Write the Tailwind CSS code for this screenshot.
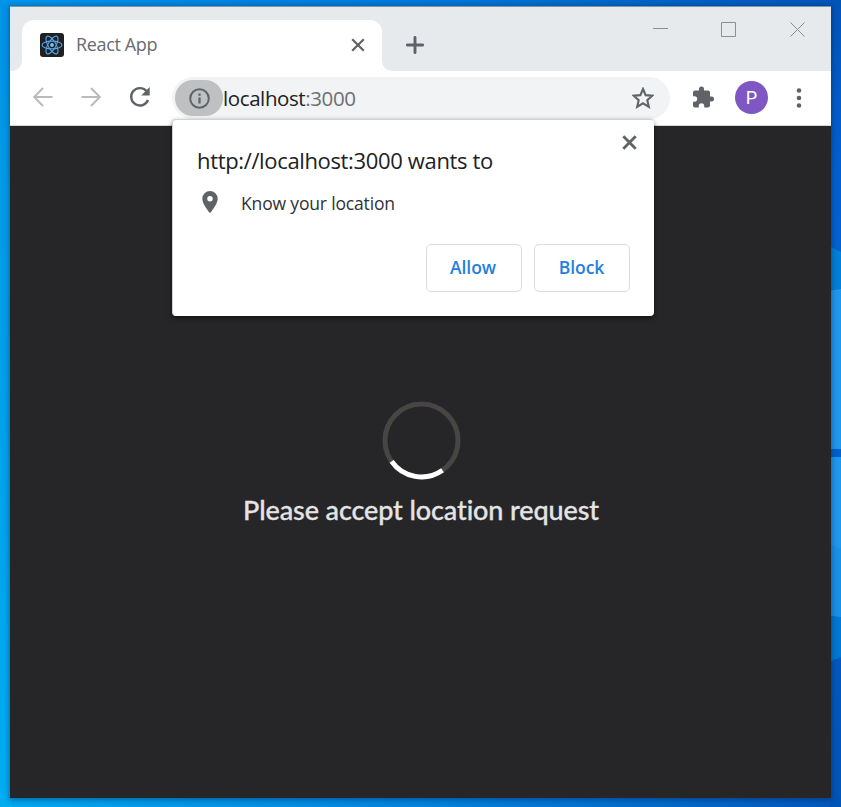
<!DOCTYPE html>
<html lang="en">
<head>
<meta charset="utf-8">
<title>React App</title>
<script src="https://cdn.jsdelivr.net/npm/@tailwindcss/browser@4"></script>
</head>
<body class="h-[807px] w-[841px] overflow-hidden bg-linear-to-r from-[#00a8f0] via-[#0084dc] to-[#0058bc] font-['Open_Sans','Noto_Sans',sans-serif]">
<div class="relative h-[807px] w-[841px] pt-[6px] pl-[10px]">
  <!-- desktop wallpaper -->
  <div class="absolute top-0 left-0 h-[807px] w-[12px] bg-linear-to-b from-[#0092e6] via-[#009ce8] via-30% to-[#00acf2]"></div>
  <div class="absolute top-0 left-0 h-[7px] w-full bg-linear-to-r from-[#0094e8] via-[#0078d8] via-50% to-[#0055b8]"></div>
  <svg class="absolute top-0 left-[829px]" width="12" height="807">
    <defs><linearGradient id="w" x1="0" x2="0" y1="0" y2="1"><stop offset="0" stop-color="#0054b8"/><stop offset=".2" stop-color="#0060d0"/><stop offset=".3" stop-color="#0062d0"/><stop offset="1" stop-color="#0055b8"/></linearGradient></defs>
    <rect width="12" height="807" fill="url(#w)"/>
    <path d="M0 246l12 6v37H0z" fill="#0080d8"/>
    <path d="M0 290l12-1v160H0z" fill="#1e98ee"/>
    <path d="M0 449h12v8H0z" fill="#0060cc"/>
    <path d="M0 457h12v160l-12-1z" fill="#1e98ee"/>
    <path d="M0 545l12 3v69l-12-1z" fill="#1890e8"/>
    <path d="M0 616l12 1v40l-12 5z" fill="#0078d4"/>
  </svg>

  <!-- browser window -->
  <div class="relative flex h-[792px] w-[821px] flex-col border-t border-[#8494a0] bg-[#262628] shadow-[0_1px_5px_1px_rgba(0,20,60,0.4)]">
    <header class="flex h-[64px] items-end bg-[#e6eaed]">
      <div class="h-[51px] w-[12px] bg-white"><div class="h-full rounded-br-[10px] bg-[#e6eaed]"></div></div>
      <div class="flex h-[51px] w-[360px] items-center rounded-t-[12px] bg-white pb-[2px] pl-[18px]">
        <svg class="h-6 w-6" viewBox="0 0 24 24" fill="none" stroke="#55a5e8" stroke-width="1.1">
          <rect width="24" height="24" rx="3" fill="#202023" stroke="none"/>
          <ellipse cx="12" cy="12" rx="10" ry="3.9"/>
          <ellipse cx="12" cy="12" rx="10" ry="3.9" transform="rotate(60 12 12)"/>
          <ellipse cx="12" cy="12" rx="10" ry="3.9" transform="rotate(120 12 12)"/>
          <circle cx="12" cy="12" r="1.9" fill="#79c4f8" stroke="none"/>
        </svg>
        <span class="ml-[12px] w-[275px] text-[18px] tracking-[-0.35px] text-[#686b70]">React App</span>
        <svg class="h-[14px] w-[14px]" viewBox="0 0 14 14" stroke="#5f6368" stroke-width="2.2"><path d="M1.2 1.2l11.6 11.6M12.8 1.2L1.2 12.8"/></svg>
      </div>
      <div class="h-[51px] w-[12px] bg-white"><div class="h-full rounded-bl-[10px] bg-[#e6eaed]"></div></div>
      <svg class="mb-[17px] ml-[12px] h-[18px] w-[18px]" viewBox="0 0 18 18" stroke="#5f6368" stroke-width="2.900" stroke-linecap="round"><path d="M1.4 9h15.2M9 1.4v15.2"/></svg>
      <svg class="mb-[33px] ml-[229px] h-[18px] w-[160px]" viewBox="0 0 160 18" fill="none" stroke="#8b8f94" stroke-width="1"><path d="M0 8.500h15"/><path d="M68.500 2.500h14v14h-14z"/><path d="M137.500 2.500l14 14M151.500 2.500l-14 14"/></svg>
    </header>

    <div class="flex h-[55px] items-center border-b border-[#d5d7d9] bg-white pb-px pl-[23px]">
      <svg class="mb-px h-[20px] w-[20px]" viewBox="0 0 20 20" fill="none" stroke="#b9bbbe" stroke-width="2.100"><path d="M19.500 10H1.500M10 1L1.200 10L10 19"/></svg>
      <svg class="mb-px ml-[28px] h-[20px] w-[20px]" viewBox="0 0 20 20" fill="none" stroke="#b9bbbe" stroke-width="2.100"><path d="M.500 10h18M10 1l8.800 9L10 19"/></svg>
      <svg class="mb-px ml-[28px] h-[22px] w-[22px]" viewBox="0 0 22 22" fill="none" stroke="#5f6368" stroke-width="2.400"><path d="M17.300 4.900A8.700 8.700 0 1 0 19 14"/><path d="M20.700 1v8.500h-8.500z" fill="#5f6368" stroke="none"/></svg>
      <div class="mt-px ml-[21px] flex h-[42px] w-[498px] items-center rounded-full bg-[#f1f3f4] pl-[3px]">
        <div class="flex h-[36px] w-[48px] items-center justify-center rounded-full bg-[#bec0c2]">
          <svg class="h-[21px] w-[21px]" viewBox="0 0 21 21" fill="none" stroke="#5f6368" stroke-width="2"><circle cx="10.500" cy="10.500" r="9.300"/><path d="M10.500 9.500v6M10.500 5.500v2.200" stroke-width="2.300"/></svg>
        </div>
        <span class="w-[409px] text-[20.500px] tracking-[-0.4px] text-[#202124]">localhost<span class="text-[#6c7074]">:3000</span></span>
        <svg class="h-[22px] w-[22px]" viewBox="1 1 20 20" fill="none" stroke="#5f6368" stroke-width="1.900"><path d="M11 2.800l2.400 5.600 6.100.5-4.600 4.100 1.400 6L11 15.800l-5.300 3.200 1.400-6L2.500 8.900l6.100-.5z"/></svg>
      </div>
      <svg class="ml-[22px] h-[24px] w-[24px]" viewBox="1 1.500 24 24" fill="#5f6368"><path d="M20.500 11H19V7c0-1.100-.9-2-2-2h-4V3.500a2.500 2.500 0 0 0-5 0V5H4c-1.100 0-2 .9-2 2v3.800h1.500a2.700 2.700 0 0 1 0 5.400H2V20c0 1.100.9 2 2 2h3.800v-1.500a2.700 2.700 0 0 1 5.400 0V22H17c1.100 0 2-.9 2-2v-4h1.500a2.500 2.500 0 0 0 0-5z" transform="translate(0 1)"/></svg>
      <div class="ml-[19px] flex h-[33px] w-[33px] items-center justify-center rounded-full bg-[#7e57c2] font-[Roboto,sans-serif] text-[18px] text-white">P</div>
      <svg class="ml-[28px] h-[20px] w-[6px]" viewBox="0 0 6 20" fill="#5f6368"><circle cx="3" cy="2.500" r="2.300"/><circle cx="3" cy="10" r="2.300"/><circle cx="3" cy="17.500" r="2.300"/></svg>
    </div>

    <main class="flex flex-1 flex-col items-center bg-[#262628] pt-[274px] pl-[1px]">
      <svg class="h-[80px] w-[80px]" viewBox="-0.500 -0.500 80 80" fill="none" stroke-width="5"><circle cx="40" cy="40" r="36.500" stroke="#484644"/><path d="M10.100 60.900A36.500 36.500 0 0 0 61 69.800" stroke="#fff"/></svg>
      <p class="mt-[10px] font-[Lato,sans-serif] text-[27px] leading-[40px] font-medium tracking-[-0.12px] whitespace-nowrap text-[#e4e4e5] [-webkit-text-stroke:0.3px_#e4e4e5]">Please accept location request</p>
    </main>
  </div>

  <!-- permission prompt -->
  <section class="absolute top-[119px] left-[172px] flex h-[197px] w-[482px] flex-col rounded-[4px] border border-[#d0d2d4] border-r-white border-b-white bg-white shadow-[0_2px_5px_rgba(0,0,0,0.5)]">
    <div class="flex h-[56px] pl-[24px]">
      <h1 class="mt-[25px] w-[425px] text-[22px] leading-[30px] tracking-[-0.35px] whitespace-nowrap text-[#202124]">http://localhost:3000 wants to</h1>
      <svg class="mt-[15px] h-[15px] w-[15px]" viewBox="0 0 15 15" stroke="#5f6368" stroke-width="2.800"><path d="M1.300 1.300l12.400 12.400M13.700 1.300L1.300 13.700"/></svg>
    </div>
    <div class="mt-[12px] flex h-[30px] items-center pl-[29px]">
      <svg class="mb-[2px] h-[22px] w-[16px]" viewBox="5 2 14 20" fill="#5f6368"><path d="M12 2a7 7 0 0 0-7 7c0 5.250 7 13 7 13s7-7.750 7-13a7 7 0 0 0-7-7zm0 9.500a2.500 2.500 0 1 1 0-5 2.500 2.500 0 0 1 0 5z"/></svg>
      <span class="ml-[23px] text-[17.500px] tracking-[-0.16px] text-[#303236]">Know your location</span>
    </div>
    <div class="mt-[26px] flex justify-end gap-[12px] pr-[23px] text-[17.500px] font-semibold tracking-[-0.1px] text-[#1f80e0]">
      <button class="h-[48px] w-[96px] rounded-[5px] border border-[#dadce0] pr-[2px] pb-[2px]">Allow</button>
      <button class="h-[48px] w-[96px] rounded-[5px] border border-[#dadce0] pr-px pb-[2px]">Block</button>
    </div>
  </section>
</div>
</body>
</html>
